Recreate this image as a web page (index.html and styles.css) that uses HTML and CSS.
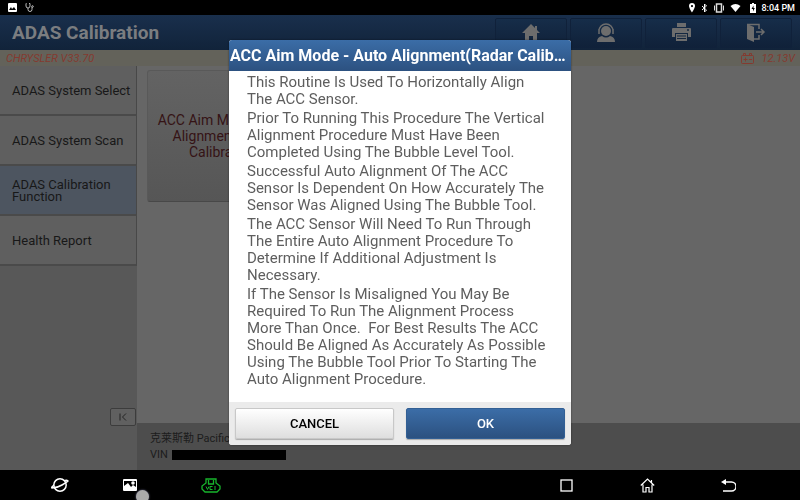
FILE: index.html
```html
<!DOCTYPE html>
<html lang="en">
<head>
    <meta charset="UTF-8">
    <meta name="viewport" content="width=device-width, initial-scale=1.0">
    <title>ADAS Calibration</title>
    <link rel="stylesheet" href="styles.css">
</head>
<body>
    <div class="status-bar">
        <div class="status-group">
            <svg width="9" height="9" viewBox="0 0 9 9"><rect width="9" height="9" rx="1" fill="#fff"/><path d="M1 7l2-3 1 2 2-2 2 3z" fill="#000"/></svg>
            <svg width="9" height="9" viewBox="0 0 9 9" fill="none" stroke="#bbb"><path d="M1.500 0.500H1V3a2 2 0 0 0 4 0V0.500H4M3 5v1.500a2 2 0 0 0 4 0V4"/><circle cx="7.500" cy="3.500" r="0.800"/></svg>
        </div>
        <div class="status-group status-right">
            <svg width="8" height="10" viewBox="0 0 8 10"><path d="M4 0a3 3 0 0 0-3 3c0 2 3 6.500 3 6.500S7 5 7 3a3 3 0 0 0-3-3zm0 2a1 1 0 1 1 0 2.200A1 1 0 0 1 4 2z" fill="#fff"/></svg>
            <svg width="7" height="10" viewBox="0 0 7 10" fill="none" stroke="#fff"><path d="M1 3l4.500 4L3.500 9V1l2 2L1 7"/></svg>
            <svg width="12" height="10" viewBox="0 0 12 10" fill="none" stroke="#ddd"><rect x="3.500" y="1" width="5" height="8" stroke-width="1.500"/><path d="M1.500 2.500v5M10.500 2.500v5"/></svg>
            <svg width="11" height="10" viewBox="0 0 11 10"><path d="M0.500 3q5-4 10 0l-5 6z" fill="#fff"/></svg>
            <svg class="battery-small" width="6" height="10" viewBox="0 0 6 10"><path d="M0 1h2V0h2v1h2v9H0z" fill="#fff"/><path d="M3.500 2.500l-2 3.500H3v2.500L4.800 5H3.500z" fill="#000"/></svg>
            <span>8:04 PM</span>
        </div>
    </div>

    <header class="header">
        <h1>ADAS Calibration</h1>
        <nav class="toolbar">
            <button class="tool" aria-label="Home">
                <svg width="18" height="18" viewBox="0 0 18 18"><path d="M9 0L0 9h3v9h4v-6h4v6h4V9h3l-3-3V2h-2v2z" fill="#6d6d6d"/></svg>
            </button>
            <button class="tool" aria-label="Support">
                <svg width="20" height="20" viewBox="0 0 20 20"><circle cx="10" cy="8" r="5" fill="#6d6d6d"/><path d="M1 19q0-5 5-6 4 3 8 0 5 1 5 6z" fill="#6d6d6d"/><path d="M3 8a7 7 0 0 1 14 0M3 6v5M17 6v5" fill="none" stroke="#6d6d6d" stroke-width="1.500"/></svg>
            </button>
            <button class="tool" aria-label="Print">
                <svg width="19" height="19" viewBox="0 0 19 19"><path d="M5 0h9v4H5zM0 6q0-1 1-1h17q1 0 1 1v8h-3v-4H3v4H0z" fill="#6d6d6d"/><path d="M4 11h11v7H4z" fill="#6d6d6d"/><path d="M5 13h9M5 15.500h9" stroke="#152840"/><circle cx="16" cy="7" r="1" fill="#152840"/></svg>
            </button>
            <button class="tool" aria-label="Exit">
                <svg width="20" height="20" viewBox="0 0 20 20"><path d="M1 1l7 3v15l-7-3z" fill="#6d6d6d"/><path d="M1 1.500h12V6M13 12v4H8M10 9h8M15 6l3 3-3 3" fill="none" stroke="#6d6d6d" stroke-width="1.500"/></svg>
            </button>
        </nav>
    </header>

    <div class="info-bar">
        <span>CHRYSLER V33.70</span>
        <span class="voltage">
            <svg width="13" height="11" viewBox="0 0 13 11" fill="none" stroke="#843a30"><rect x="0.500" y="2.500" width="12" height="8" rx="1"/><path d="M2.500 2V0.500h2V2M8.500 2V0.500h2V2M2.500 6.500h4M4.500 4.500v4M8 6.500h3"/></svg>
            12.13V
        </span>
    </div>

    <div class="content">
        <aside class="sidebar">
            <button class="menu-item">ADAS System Select</button>
            <button class="menu-item">ADAS System Scan</button>
            <button class="menu-item active">ADAS Calibration Function</button>
            <button class="menu-item">Health Report</button>
            <button class="collapse" aria-label="Collapse menu">
                <svg width="8" height="8" viewBox="0 0 8 8" fill="none" stroke="#222"><path d="M1 0.500v7M7 0.500L3.500 4 7 7.500"/></svg>
            </button>
        </aside>
        <main class="main">
            <div class="cards">
                <button class="card">ACC Aim Mode - Auto Alignment(Radar Calibration)</button>
            </div>
            <footer class="vehicle">
                <div>克莱斯勒 Pacifica</div>
                <div class="vin">VIN <span class="redacted"></span></div>
            </footer>
        </main>
    </div>

    <nav class="system-nav">
        <button class="nav-button" aria-label="Browser">
            <svg width="18" height="16" viewBox="0 0 18 16" fill="none" stroke="#fff" stroke-width="1.500"><circle cx="9" cy="8" r="6.200"/><path d="M3 8Q0 10.500 1 11q5 0 10-3t6-4Q17 3 14 3.500"/></svg>
        </button>
        <button class="nav-button" aria-label="Gallery">
            <svg width="14" height="12" viewBox="0 0 14 12"><rect width="14" height="12" rx="1" fill="#fff"/><path d="M1 2h12v6l-3-2-2 2-3-4-4 3z" fill="#000"/><circle cx="10" cy="4" r="1.800" fill="#fff"/></svg>
            <span class="touch-dot"></span>
        </button>
        <button class="nav-button" aria-label="VCI">
            <svg width="20" height="15" viewBox="0 0 20 15" fill="none" stroke="#17b52c" stroke-width="1.300"><path d="M5 1h10v4l4 3v3l-3 3H4l-3-3V8l4-3z"/><path d="M7.500 2v4h5V2"/><path d="M5 8.500l1.500 3L8 8.500M11.500 8.500H9v3h2.500M14 8v4" stroke-width="1"/></svg>
        </button>
        <span class="nav-space"></span>
        <button class="nav-button" aria-label="Recent apps">
            <svg width="13" height="13" viewBox="0 0 13 13" fill="none" stroke="#fff" stroke-width="1.300"><rect x="1" y="1" width="11" height="11"/></svg>
        </button>
        <button class="nav-button" aria-label="Home screen">
            <svg width="15" height="15" viewBox="0 0 15 15" fill="none" stroke="#fff" stroke-width="1.200"><path d="M0.800 7.500L7.500 1l6.700 6.500M11.500 4.500V2M3 6.500V14h3V9.500h3V14h3V6.500"/></svg>
        </button>
        <button class="nav-button" aria-label="Back">
            <svg width="15" height="13" viewBox="0 0 15 13"><path d="M4 3h6.500a4.500 4.500 0 0 1 0 9H2" fill="none" stroke="#fff" stroke-width="1.400"/><path d="M0 3l5-3v6z" fill="#fff"/></svg>
        </button>
    </nav>

    <div class="overlay">
        <div class="modal" role="dialog" aria-labelledby="modalTitle">
            <h2 id="modalTitle" class="modal-title">ACC Aim Mode - Auto Alignment(Radar Calibration)</h2>
            <div class="modal-body">
                <p>This Routine Is Used To Horizontally Align The ACC Sensor.</p>
                <p>Prior To Running This Procedure The Vertical Alignment Procedure Must Have Been Completed Using The Bubble Level Tool.</p>
                <p>Successful Auto Alignment Of The ACC Sensor Is Dependent On How Accurately The Sensor Was Aligned Using The Bubble Tool.</p>
                <p>The ACC Sensor Will Need To Run Through The Entire Auto Alignment Procedure To Determine If Additional Adjustment Is Necessary.</p>
                <p>If The Sensor Is Misaligned You May Be Required To Run The Alignment Process More Than Once.&nbsp; For Best Results The ACC Should Be Aligned As Accurately As Possible Using The Bubble Tool Prior To Starting The Auto Alignment Procedure.</p>
            </div>
            <div class="modal-actions">
                <button class="button">CANCEL</button>
                <button class="button primary">OK</button>
            </div>
        </div>
    </div>
</body>
</html>
```
FILE: styles.css
```css
* {
    box-sizing: border-box;
}
body {
    font-family: Roboto, "Noto Sans CJK SC", sans-serif;
    background-color: #666;
    margin: 0;
    display: flex;
    flex-direction: column;
    min-height: 100vh;
}
button {
    font-family: inherit;
    margin: 0;
    padding: 0;
    border: none;
    background: none;
    cursor: pointer;
}
svg {
    display: block;
    flex-shrink: 0;
}
.status-bar {
    display: flex;
    justify-content: space-between;
    height: 15px;
    padding: 0 5px 0 8px;
    background-color: #000;
    color: #fff;
    font-size: 9px;
    font-weight: 500;
}
.status-group {
    display: flex;
    align-items: center;
    gap: 8px;
}
.status-right {
    gap: 5px;
}
.battery-small {
    margin-left: 4px;
}
.header {
    display: flex;
    justify-content: space-between;
    align-items: center;
    height: 35px;
    padding: 0 8px 0 12px;
    background: linear-gradient(#192f4c, #11233a);
}
.header h1 {
    margin: 0;
    color: #7b7d80;
    font-size: 19px;
    font-weight: bold;
}
.toolbar {
    display: flex;
    gap: 3px;
}
.tool {
    display: flex;
    justify-content: center;
    align-items: center;
    width: 72px;
    height: 30px;
    border: 1px solid #10213a;
    border-radius: 2px;
    background: linear-gradient(#162d49, #102139);
}
.info-bar {
    display: flex;
    justify-content: space-between;
    align-items: center;
    height: 16px;
    padding: 0 5px 0 6px;
    background-color: #63625a;
    color: #843a30;
    font-size: 11px;
    font-style: italic;
}
.voltage {
    display: flex;
    align-items: center;
    gap: 7px;
}
.content {
    display: flex;
    flex: 1;
}
.sidebar {
    display: flex;
    flex-direction: column;
    width: 137px;
    background-color: #585858;
}
.menu-item {
    height: 50px;
    padding: 2px 12px 0;
    border-right: 1px solid #484848;
    border-bottom: 2px solid #4a4a4a;
    background-color: #5f5f5f;
    color: #181818;
    font-size: 13px;
    line-height: 12px;
    text-align: left;
}
.menu-item:first-child {
    padding-right: 0;
}
.menu-item.active {
    background-color: #4d5560;
}
.collapse {
    display: flex;
    justify-content: center;
    align-items: center;
    align-self: flex-end;
    width: 26px;
    height: 18px;
    margin-top: auto;
    margin-right: 1px;
    margin-bottom: 44px;
    border: 1px solid #3c3c3c;
    border-radius: 2px;
    background-color: #606060;
}
.main {
    display: flex;
    flex: 1;
    flex-direction: column;
}
.cards {
    flex: 1;
    padding: 4px 10px;
}
.card {
    width: 156px;
    height: 132px;
    padding: 0 8px;
    border: 1px solid #595959;
    border-bottom-color: #484848;
    border-radius: 3px;
    background: linear-gradient(#636363, #565656);
    color: #351315;
    font-size: 14px;
    line-height: 16px;
}
.vehicle {
    height: 47px;
    padding: 8px 13px;
    background-color: #4d4d4d;
    color: #1c1c1c;
    font-size: 11px;
    line-height: 16px;
}
.vin {
    display: flex;
    align-items: center;
    gap: 4px;
}
.redacted {
    width: 114px;
    height: 10px;
    background-color: #000;
}
.system-nav {
    display: flex;
    align-items: center;
    height: 30px;
    padding: 0 31px 0 20px;
    background-color: #000;
}
.nav-button {
    position: relative;
    display: flex;
    justify-content: center;
    align-items: center;
    width: 81px;
    height: 30px;
}
.nav-button:first-child {
    width: 80px;
}
.nav-button:nth-child(2) {
    width: 60px;
}
.nav-button:nth-child(3) {
    width: 102px;
}
.nav-space {
    flex: 1;
}
.touch-dot {
    position: absolute;
    right: 11px;
    bottom: -3px;
    width: 13px;
    height: 13px;
    border-radius: 50%;
    background-color: #aaa;
    box-shadow: 0 0 2px #77779a;
}
.overlay {
    position: fixed;
    inset: 0;
    display: flex;
    justify-content: center;
    align-items: flex-start;
    padding: 40px 0 0;
    overflow: hidden;
}
.modal {
    width: 342px;
    border-radius: 3px;
    background-color: #fff;
    overflow: hidden;
    box-shadow: 0 0 2px rgba(0, 0, 0, 0.5);
}
.modal-title {
    margin: 0;
    padding: 0 1px;
    background: linear-gradient(#3b6da7, #2c5180);
    color: #fff;
    font-size: 16px;
    font-weight: bold;
    line-height: 31px;
    white-space: nowrap;
    overflow: hidden;
    text-overflow: ellipsis;
}
.modal-body {
    display: flex;
    flex-direction: column;
    gap: 2px;
    padding: 3px 20px 14px 18px;
    color: #5e5e5e;
    font-size: 15px;
    line-height: 17px;
}
.modal-body p {
    margin: 0;
}
.modal-actions {
    display: flex;
    gap: 12px;
    padding: 6px;
    background-color: #ebebeb;
}
.button {
    flex: 1;
    height: 31px;
    border: 1px solid #c8c8c8;
    border-radius: 2px;
    background: linear-gradient(#fff, #dedede);
    box-shadow: 0 1px 1px #aaa;
    color: #000;
    font-size: 13px;
    font-weight: 500;
}
.button.primary {
    border-color: #325f94;
    background: linear-gradient(#3b6da7, #2c5180);
    color: #fff;
}
```
